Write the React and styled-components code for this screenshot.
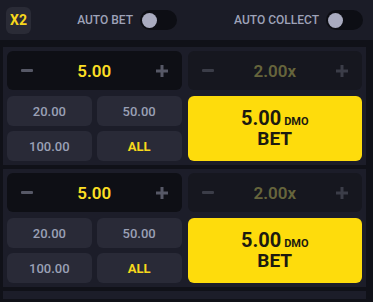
import React from "react";
import styled, { createGlobalStyle } from "styled-components";

const Global = createGlobalStyle`
  html, body { margin: 0; padding: 0; background: #101118; }
  body { font-family: Roboto, "Noto Sans", sans-serif; width: 373px; height: 302px; overflow: hidden; }
`;

const Page = styled.div`
  display: flex;
  flex-direction: column;
  gap: 4px;
  width: 373px;
  height: 302px;
  overflow: hidden;
`;

const TopBar = styled.div`
  height: 40px;
  flex-shrink: 0;
  margin-bottom: 3px;
  background: #1b1c27;
  display: flex;
  align-items: center;
  padding: 0 10px 0 6px;
  box-sizing: border-box;
`;

const X2Button = styled.div`
  width: 32px;
  height: 27px;
  border-radius: 6px;
  background: #2a2b36;
  color: #f7d81c;
  font-weight: 700;
  font-size: 14px;
  display: flex;
  align-items: center;
  justify-content: center;
`;

const ToggleGroup = styled.div`
  display: flex;
  align-items: center;
  gap: 7px;
  margin-left: ${(p) => p.$ml}px;
  white-space: nowrap;
`;

const ToggleLabel = styled.span`
  color: #9ea2b8;
  font-size: 12px;
  font-weight: 500;
`;

const Track = styled.div`
  width: 37px;
  height: 20px;
  border-radius: 10px;
  background: #0d0e14;
  display: flex;
  align-items: center;
  padding: 0 2px;
  box-sizing: border-box;
  flex-shrink: 0;
`;

const Knob = styled.div`
  width: 15px;
  height: 15px;
  border-radius: 50%;
  background: #a9abbf;
`;

const Section = styled.div`
  flex-shrink: 0;
  margin: 0 7px 0 3px;
  background: #1c1d29;
  padding: 4px;
  display: grid;
  grid-template-columns: 1fr 1fr;
  column-gap: 6px;
  row-gap: 6px;
`;

const Stepper = styled.div`
  height: 39px;
  border-radius: 6px;
  background: ${(p) => (p.$disabled ? "#16171f" : "#0e0f15")};
  display: flex;
  align-items: center;
  justify-content: space-between;
  padding: 0 14px;
`;

const StepValue = styled.span`
  color: ${(p) => (p.$disabled ? "#66653c" : "#fcdf24")};
  font-size: 17px;
  font-weight: 600;
`;

const Minus = styled.div`
  width: 12px;
  height: 3px;
  background: ${(p) => (p.$disabled ? "#3b3d48" : "#565866")};
  border-radius: 1px;
`;

const PlusIcon = ({ disabled }) => (
  <svg width="12" height="12" viewBox="0 0 12 12">
    <path d="M4.5 0h3v4.5H12v3H7.5V12h-3V7.5H0v-3h4.5z" fill={disabled ? "#3b3d48" : "#565866"} />
  </svg>
);

const QuickGrid = styled.div`
  display: grid;
  grid-template-columns: 1fr 1fr;
  gap: 5px;
`;

const QuickButton = styled.div`
  height: 30px;
  border-radius: 6px;
  background: #292a37;
  color: ${(p) => (p.$accent ? "#f7d81c" : "#9aa0b5")};
  font-size: 13px;
  font-weight: ${(p) => (p.$accent ? 700 : 500)};
  display: flex;
  align-items: center;
  justify-content: center;
`;

const BetButton = styled.div`
  border-radius: 6px;
  background: #fedc0c;
  color: #1c1a10;
  display: flex;
  flex-direction: column;
  align-items: center;
  justify-content: center;
  line-height: 1.1;
`;

const BetAmount = styled.div`
  font-size: 20px;
  font-weight: 700;
`;

const Currency = styled.span`
  font-size: 11px;
  font-weight: 700;
  margin-left: 3px;
`;

const BetLabel = styled.div`
  font-size: 19px;
  font-weight: 700;
`;

const BetPanel = () => (
  <Section>
    <Stepper>
      <Minus />
      <StepValue>5.00</StepValue>
      <PlusIcon />
    </Stepper>
    <Stepper $disabled>
      <Minus $disabled />
      <StepValue $disabled>2.00x</StepValue>
      <PlusIcon disabled />
    </Stepper>
    <QuickGrid>
      <QuickButton>20.00</QuickButton>
      <QuickButton>50.00</QuickButton>
      <QuickButton>100.00</QuickButton>
      <QuickButton $accent>ALL</QuickButton>
    </QuickGrid>
    <BetButton>
      <BetAmount>
        5.00<Currency>DMO</Currency>
      </BetAmount>
      <BetLabel>BET</BetLabel>
    </BetButton>
  </Section>
);

export default function App() {
  return (
    <>
      <Global />
      <Page>
        <TopBar>
          <X2Button>X2</X2Button>
          <ToggleGroup $ml={46}>
            <ToggleLabel>AUTO BET</ToggleLabel>
            <Track><Knob /></Track>
          </ToggleGroup>
          <ToggleGroup $ml={57}>
            <ToggleLabel>AUTO COLLECT</ToggleLabel>
            <Track><Knob /></Track>
          </ToggleGroup>
        </TopBar>
        <BetPanel />
        <BetPanel />
        <Section />
      </Page>
    </>
  );
}
